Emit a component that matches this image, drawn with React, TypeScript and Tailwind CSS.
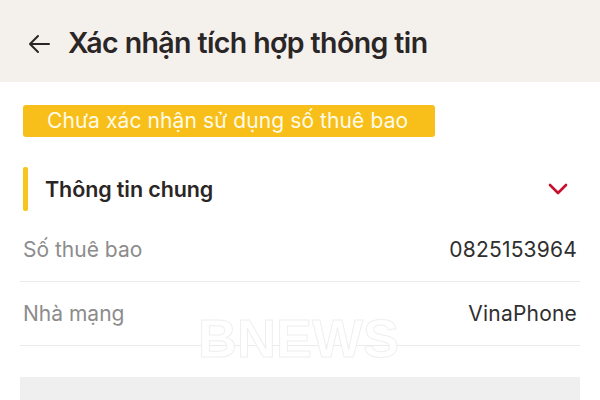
function ChevronDown() {
  return (
    <svg width="20" height="12" viewBox="0 0 20 12" fill="none">
      <path d="M2 2 L10 10 L18 2" stroke="#c8102e" strokeWidth="2.6" strokeLinecap="round" strokeLinejoin="round" />
    </svg>
  );
}

function BackArrow() {
  return (
    <svg width="24" height="20" viewBox="0 0 24 20" fill="none">
      <path d="M22 10 H3 M11 2 L3 10 L11 18" stroke="#2b2626" strokeWidth="2" strokeLinecap="round" strokeLinejoin="round" />
    </svg>
  );
}

function InfoRow({ label, value }: { label: string; value: string }) {
  return (
    <div className="flex h-[64px] items-center justify-between border-b border-[#ebebeb]">
      <span className="pl-[3px] text-[21px] text-[#8c8c8c]">{label}</span>
      <span className="pr-[3px] text-[21px] tracking-[0.2px] text-[#2f2f2f]">{value}</span>
    </div>
  );
}

export default function App() {
  return (
    <div className="relative h-[400px] w-[600px] overflow-hidden bg-white font-['Inter',sans-serif]">
      <div className="flex h-[82px] items-center bg-[#f4f0ec] pl-[27px] pt-[5px]">
        <BackArrow />
        <h1 className="ml-[17px] text-[28.5px] font-semibold tracking-[-0.6px] text-[#2b2626]">Xác nhận tích hợp thông tin</h1>
      </div>

      <div className="px-[20px] pt-[23px]">
        <div className="ml-[3px] flex h-[32px] w-[412px] items-center rounded-[3px] bg-[#f8bf1a] pl-[24px]">
          <span className="text-[21px] tracking-[0.1px] text-[#fffbe8]">Chưa xác nhận sử dụng số thuê bao</span>
        </div>

        <div className="mt-[30px] flex h-[44px] items-center justify-between">
          <div className="flex h-full items-center">
            <div className="ml-[3px] h-full w-[5px] rounded-[2px] bg-[#f8c51c]" />
            <span className="ml-[17px] text-[21.5px] font-semibold tracking-[-0.1px] text-[#2b2626]">Thông tin chung</span>
          </div>
          <div className="pr-[12px]">
            <ChevronDown />
          </div>
        </div>

        <div className="mt-[7px]">
          <InfoRow label="Số thuê bao" value="0825153964" />
          <InfoRow label="Nhà mạng" value="VinaPhone" />
        </div>

        <div className="mt-[31px] h-[40px] bg-[#efefef]" />
      </div>

      <div className="pointer-events-none absolute left-[198px] top-[311px] font-['Liberation_Sans',sans-serif] text-[54px] font-bold leading-none text-white [-webkit-text-stroke:1px_#efefef]">BNEWS</div>
    </div>
  );
}
